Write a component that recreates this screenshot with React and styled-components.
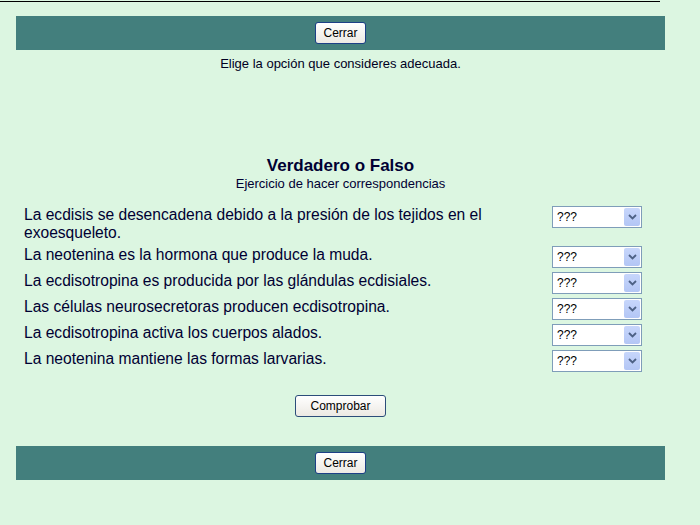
import React from "react";
import styled, { createGlobalStyle } from "styled-components";

const GlobalStyle = createGlobalStyle`
  html, body {
    margin: 0;
    padding: 0;
    background: #dcf6e1;
  }
  body {
    font-family: "Liberation Sans", Arial, sans-serif;
    color: #000033;
  }
`;

const Page = styled.div`
  width: 700px;
  height: 525px;
  box-sizing: border-box;
  padding: 0 35px 0 16px;
`;

const TopRule = styled.div`
  width: 660px;
  height: 1px;
  margin: 1px 0 14px -16px;
  background: #000;
`;

const NavBar = styled.div`
  background: #437f7d;
  height: 34px;
  display: flex;
  align-items: center;
  justify-content: center;
`;

const Button = styled.button`
  font-family: "Liberation Sans", Arial, sans-serif;
  font-size: 12px;
  color: #000;
  height: 22px;
  padding: 0 ${(p) => (p.$big ? "14px" : "7px")};
  background: linear-gradient(#ffffff, #ece9e3);
  border: 1px solid ${(p) => (p.$big ? "#2c4d7a" : "#1c3f86")};
  border-radius: 3px;
  cursor: pointer;
`;

const Intro = styled.p`
  margin: 6px 0 0;
  font-size: 13px;
  line-height: 16px;
  text-align: center;
  color: #000022;
`;

const Heading = styled.h2`
  margin: 84px 0 0;
  font-size: 17px;
  line-height: 20px;
  font-weight: bold;
  text-align: center;
  color: #000033;
`;

const SubHeading = styled.h3`
  margin: 0;
  font-size: 13px;
  line-height: 16px;
  font-weight: normal;
  text-align: center;
  color: #000033;
`;

const Table = styled.div`
  margin: 14px 0 0 8px;
  width: 618px;
  display: flex;
  flex-direction: column;
  gap: 4px;
`;

const Row = styled.div`
  display: flex;
  align-items: flex-start;
  justify-content: space-between;
`;

const Question = styled.div`
  font-size: 15.6px;
  line-height: 18px;
  width: 520px;
  color: #000033;
`;

const SelectBox = styled.div`
  width: 88px;
  height: 20px;
  border: 1px solid #7f9db9;
  background: #fff;
  display: flex;
  align-items: center;
  font-size: 12px;
  color: #000;
  flex-shrink: 0;
`;

const SelectText = styled.span`
  flex: 1;
  padding-left: 4px;
`;

const Arrow = styled.span`
  width: 16px;
  height: 18px;
  margin-right: 1px;
  background: linear-gradient(#c7d6fb, #b3c6f5);
  border-radius: 2px;
  display: flex;
  align-items: center;
  justify-content: center;
`;

const Actions = styled.div`
  display: flex;
  justify-content: center;
  margin: 23px 0 29px;
`;

const questions = [
  "La ecdisis se desencadena debido a la presión de los tejidos en el exoesqueleto.",
  "La neotenina es la hormona que produce la muda.",
  "La ecdisotropina es producida por las glándulas ecdisiales.",
  "Las células neurosecretoras producen ecdisotropina.",
  "La ecdisotropina activa los cuerpos alados.",
  "La neotenina mantiene las formas larvarias.",
];

const Select = () => (
  <SelectBox>
    <SelectText>???</SelectText>
    <Arrow>
      <svg width="9" height="6" viewBox="0 0 9 6">
        <path d="M1 1 L4.5 4.5 L8 1" stroke="#4d6185" strokeWidth="1.8" fill="none" />
      </svg>
    </Arrow>
  </SelectBox>
);

const App = () => (
  <>
    <GlobalStyle />
    <Page>
      <TopRule />
      <NavBar>
        <Button>Cerrar</Button>
      </NavBar>
      <Intro>Elige la opción que consideres adecuada.</Intro>
      <Heading>Verdadero o Falso</Heading>
      <SubHeading>Ejercicio de hacer correspondencias</SubHeading>
      <Table>
        {questions.map((q, i) => (
          <Row key={i}>
            <Question>{q}</Question>
            <Select />
          </Row>
        ))}
      </Table>
      <Actions>
        <Button $big>Comprobar</Button>
      </Actions>
      <NavBar>
        <Button>Cerrar</Button>
      </NavBar>
    </Page>
  </>
);

export default App;
